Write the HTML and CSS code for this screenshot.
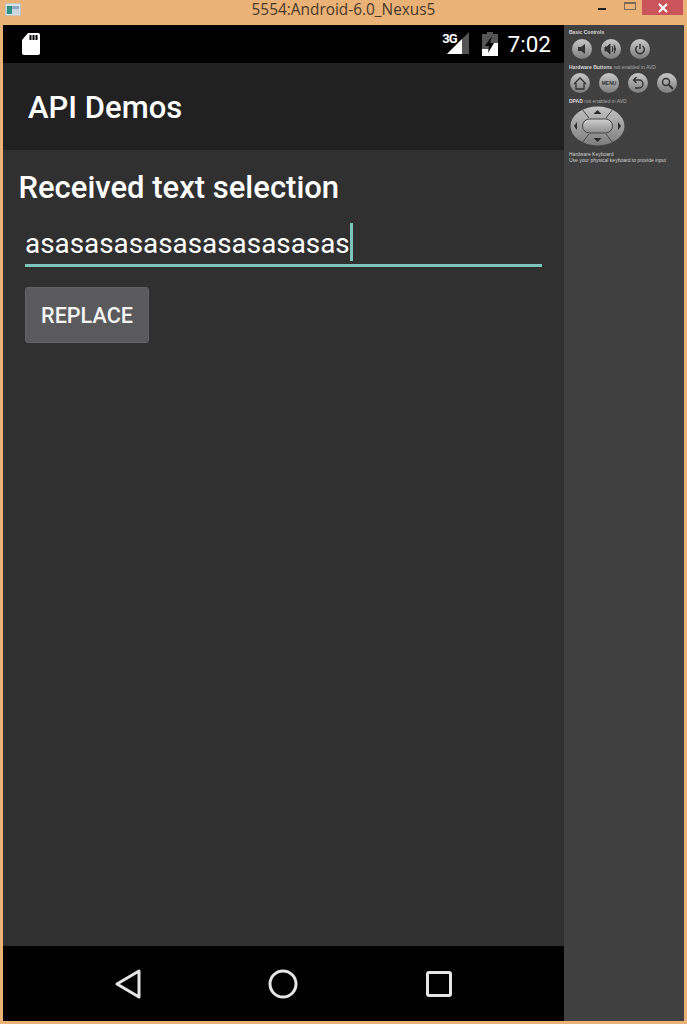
FILE: index.html
```html
<!DOCTYPE html>
<html lang="en">
<head>
<meta charset="utf-8">
<title>5554:Android-6.0_Nexus5</title>
<link rel="stylesheet" href="styles.css">
</head>
<body>
<div class="window">
  <header class="titlebar">
    <svg class="app-icon" width="16" height="13" viewBox="0 0 18 14"><rect x="0.5" y="0.5" width="17" height="13" fill="#dfe8e8" stroke="#b9c4c8"/><rect x="2" y="3" width="6" height="9" fill="#2f8f80"/><rect x="8" y="3" width="8" height="4" fill="#8fa9c4"/><rect x="8" y="7" width="8" height="5" fill="#c6d6dc"/></svg>
    <div class="title">5554:Android-6.0_Nexus5</div>
    <div class="win-controls">
      <span class="min"></span>
      <span class="max"></span>
      <span class="close"><svg width="12" height="10" viewBox="0 0 12 10"><path d="M2 1 L10 9 M10 1 L2 9" stroke="#fff" stroke-width="2"/></svg></span>
    </div>
  </header>
  <div class="body">
    <main class="phone">
      <div class="statusbar">
        <svg class="sd" width="18" height="22" viewBox="0 0 18 22"><path d="M6 0 H16 a2 2 0 0 1 2 2 V20 a2 2 0 0 1 -2 2 H2 a2 2 0 0 1 -2 -2 V7 Z" fill="#fff"/><path d="M7.500 2 h2 v5 h-2 Z M10.500 2 h2 v5 h-2 Z M13.500 2 h2 v5 h-2 Z" fill="#000"/></svg>
        <div class="status-right">
          <span class="net">3G</span>
          <svg class="signal" width="22" height="22" viewBox="0 0 22 22"><path d="M22 0 V22 H0 Z" fill="#555"/><path d="M15 7 V22 H0 Z" fill="#fff"/></svg>
          <svg class="battery" width="16" height="24" viewBox="0 0 16 24"><path d="M5 0 H11 V2 H16 V24 H0 V2 H5 Z" fill="#555"/><path d="M16 11 V24 H0 V17 L7 17 L11 11 Z" fill="#fff"/><path d="M10 4 L3 14 H7 L6 21 L12 11 H8 Z" fill="#000"/></svg>
          <span class="clock">7:02</span>
        </div>
      </div>
      <div class="actionbar">API Demos</div>
      <section class="content">
        <h1 class="heading">Received text selection</h1>
        <div class="field"><span class="field-text">asasasasasasasasasasas</span><span class="caret"></span></div>
        <button class="replace">REPLACE</button>
      </section>
      <nav class="navbar">
        <svg width="26" height="30" viewBox="0 0 26 30"><path d="M24 2 V28 L2 15 Z" fill="none" stroke="#e6e6e6" stroke-width="3" stroke-linejoin="round"/></svg>
        <svg width="30" height="30" viewBox="0 0 30 30"><circle cx="15" cy="15" r="13" fill="none" stroke="#e6e6e6" stroke-width="3"/></svg>
        <svg width="26" height="26" viewBox="0 0 26 26"><rect x="1.500" y="1.500" width="23" height="23" rx="1.500" fill="none" stroke="#e6e6e6" stroke-width="3"/></svg>
      </nav>
    </main>
    <aside class="panel">
      <div class="panel-label">Basic Controls</div>
      <div class="btn-row basic">
        <span class="round"><svg width="12" height="12" viewBox="0 0 12 12"><path d="M2 4 H5 L9 1 V11 L5 8 H2 Z" fill="#333"/></svg></span>
        <span class="round"><svg width="14" height="12" viewBox="0 0 14 12"><path d="M1 4 H3 L6 1 V11 L3 8 H1 Z M8 3 Q10 6 8 9 M10 1.500 Q13 6 10 10.500" fill="#333" stroke="#333"/></svg></span>
        <span class="round"><svg width="12" height="12" viewBox="0 0 12 12"><path d="M6 1 V6 M3.500 3 A4.300 4.300 0 1 0 8.500 3" fill="none" stroke="#333" stroke-width="1.500"/></svg></span>
      </div>
      <div class="panel-label"><b>Hardware Buttons</b> not enabled in AVD</div>
      <div class="btn-row hardware">
        <span class="round"><svg width="14" height="13" viewBox="0 0 14 13"><path d="M1 7 L7 1 L13 7 M3 6 V12 H11 V6" fill="none" stroke="#333" stroke-width="1.300"/></svg></span>
        <span class="round menu">MENU</span>
        <span class="round"><svg width="14" height="14" viewBox="0 0 14 14"><path d="M3 4 H8 A4 4 0 0 1 8 12 H4 M5.500 1 L2.500 4 L5.500 7" fill="none" stroke="#333" stroke-width="1.400"/></svg></span>
        <span class="round"><svg width="13" height="13" viewBox="0 0 13 13"><circle cx="5" cy="5" r="3.500" fill="none" stroke="#333" stroke-width="1.500"/><path d="M8 8 L12 12" stroke="#333" stroke-width="2"/></svg></span>
      </div>
      <div class="panel-label"><b>DPAD</b> not enabled in AVD</div>
      <svg class="dpad" width="56" height="40" viewBox="0 0 56 40">
        <defs>
          <linearGradient id="pad" x1="0" y1="0" x2="0" y2="1"><stop offset="0" stop-color="#c4c4c4"/><stop offset="1" stop-color="#7c7c7c"/></linearGradient>
          <linearGradient id="center" x1="0" y1="0" x2="0" y2="1"><stop offset="0" stop-color="#d0d0d0"/><stop offset="1" stop-color="#8c8c8c"/></linearGradient>
        </defs>
        <ellipse cx="27.500" cy="20" rx="27" ry="19.500" fill="url(#pad)"/>
        <path d="M12 3 L19 12 M43 3 L36 12 M12 37 L19 28 M43 37 L36 28" stroke="#444" stroke-width="1"/>
        <rect x="12.500" y="13" width="30" height="14" rx="7" fill="url(#center)" stroke="#444"/>
        <path d="M27.500 4 L31.500 8 H23.500 Z M27.500 36 L31.500 32 H23.500 Z M4 20 L7 16 V24 Z M51 20 L48 16 V24 Z" fill="#2b2b2b"/>
      </svg>
      <div class="panel-label keyboard">Hardware Keyboard<br>Use your physical keyboard to provide input</div>
    </aside>
  </div>
</div>
</body>
</html>
```
FILE: styles.css
```css
* { box-sizing: border-box; }
html, body { margin: 0; padding: 0; }
body { width: 687px; height: 1024px; overflow: hidden; background: #ebb278; font-family: "Roboto", "Liberation Sans", sans-serif; }
.window { width: 687px; height: 1024px; display: flex; flex-direction: column; padding: 0 3px 3px; background: #ebb278; }
.titlebar { height: 25px; flex: none; display: flex; align-items: center; position: relative; margin: 0 -3px; }
.app-icon { margin: -7px 0 0 5px; }
.title { position: absolute; left: 0; right: 0; top: 2px; text-align: center; font: 15.400px/16px "Open Sans", "Liberation Sans", sans-serif; color: #4a3a28; }
.win-controls { position: absolute; top: 0; right: 4px; display: flex; }
.min { width: 8px; height: 2px; background: #222; margin: 8px 18px 0 0; }
.max { width: 12px; height: 8px; border: 1px solid #7a6a55; border-top-width: 2px; margin: 2px 6px 0 0; }
.close { width: 41px; height: 15px; background: #c9555a; display: flex; align-items: center; justify-content: center; }
.body { flex: 1; min-height: 0; display: flex; }
.phone { width: 561px; flex: none; display: flex; flex-direction: column; background: #303030; }
.statusbar { height: 38px; flex: none; background: #000; display: flex; align-items: center; justify-content: space-between; padding: 0 13px 0 19px; }
.sd { margin-top: -1px; }
.status-right { display: flex; align-items: center; color: #fff; }
.net { font: bold 13px/14px "Roboto", sans-serif; margin: -11px -10px 0 0; letter-spacing: -1px; position: relative; z-index: 1; }
.signal { margin: -3px 13px 0 0; }
.battery { margin-right: 10px; }
.clock { font-size: 22.500px; line-height: 26px; }
.actionbar { height: 87px; flex: none; background: #212121; color: #fff; font-size: 31px; font-weight: 500; padding: 0 0 0 25px; line-height: 89px; }
.content { flex: 1; min-height: 0; padding: 21px 22px 0 15.500px; }
.heading { margin: 0; color: #fff; font-size: 31px; font-weight: 500; line-height: 34px; }
.field { margin: 18px 0 0 6.500px; height: 44px; border-bottom: 3px solid #7cc4ba; display: flex; align-items: flex-end; color: #fff; font-size: 27.850px; line-height: 34px; }
.field-text { padding-bottom: 3px; }
.caret { width: 3px; height: 38px; background: #7cc4ba; margin-bottom: 3px; }
.replace { display: block; margin: 20px 0 0 6.500px; width: 124px; height: 56px; border: 1px solid #626264; border-radius: 3px; background: #5a5a5c; color: #f4f4f4; font: 500 21.600px/26px "Roboto", sans-serif; padding: 2px 0 0; }
.navbar { height: 75px; flex: none; background: #000; display: flex; align-items: center; padding-left: 112px; }
.navbar svg:nth-child(2) { margin-left: 127px; }
.navbar svg:nth-child(3) { margin-left: 128px; }
.panel { flex: 1; background: #404040; padding: 4px 0 0 5px; color: #c8c8c8; font-family: "Liberation Sans", sans-serif; }
.panel-label { font-size: 5px; line-height: 7px; color: #a8a8a8; white-space: nowrap; }
.panel-label b { color: #d8d8d8; font-weight: bold; }
.panel-label:first-child { color: #d8d8d8; font-weight: bold; }
.btn-row { display: flex; }
.btn-row.basic { gap: 9px; padding: 3px 0 5px 3px; }
.btn-row.hardware { gap: 9px; padding: 2px 0 5px 1px; }
.round { width: 20px; height: 20px; border-radius: 50%; background: linear-gradient(#c8c8c8, #7c7c7c); display: flex; align-items: center; justify-content: center; }
.menu { font-size: 5px; font-weight: bold; color: #333; }
.dpad { display: block; margin: 1px 0 0 1px; }
.keyboard { margin-top: 5px; line-height: 6px; color: #d0d0d0; }
```
